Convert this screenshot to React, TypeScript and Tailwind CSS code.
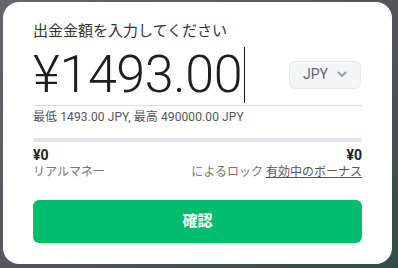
export default function App() {
  return (
    <div className="w-[398px] h-[268px] bg-gradient-to-br from-[#65656d] via-[#55555d] to-[#2f4d47] p-[3px] pt-[2px] pr-[6px] pb-[4px]">
      <div
        className="h-full w-full bg-white rounded-[16px] px-[30px] pt-[18px] text-[#222]"
        style={{ fontFamily: 'Roboto, "Noto Sans CJK JP", sans-serif' }}
      >
        <div className="text-[15px] leading-[22px] text-[#333]">出金金額を入力してください</div>
        <div className="flex items-center justify-between border-b border-[#dcdcdc] h-[62px] mt-[2px]">
          <div className="flex items-center">
            <span className="text-[52px] font-light leading-none text-[#1d1d24] tracking-[-0.4px]">¥1493.00</span>
            <span className="w-px h-[56px] bg-[#111] ml-[2px]" />
          </div>
          <div className="flex items-center gap-[9px] h-[28px] px-[13px] rounded-[6px] bg-[#f3f5f8] border border-[#e4e7eb] text-[14px] text-[#666] mr-[1px]">
            JPY
            <svg width="10" height="7" viewBox="0 0 10 7">
              <path d="M1.5 1.5 L5 5 L8.5 1.5" fill="none" stroke="#9aa0a8" strokeWidth="2" strokeLinecap="round" strokeLinejoin="round" />
            </svg>
          </div>
        </div>
        <div className="text-[12px] text-[#555] mt-[3px] leading-[17px] tracking-[0.1px]">最低 1493.00 JPY, 最高 490000.00 JPY</div>
        <div className="h-[4px] rounded-full bg-[#e1e4e8] mt-[12px]" />
        <div className="flex justify-between items-end mt-[4px]">
          <div className="flex flex-col">
            <span className="text-[14px] font-bold leading-[18px] text-[#222]">¥0</span>
            <span className="text-[12px] leading-[17px] text-[#777]">リアルマネー</span>
          </div>
          <div className="flex flex-col items-end">
            <span className="text-[14px] font-bold leading-[18px] text-[#222]">¥0</span>
            <span className="text-[12px] leading-[17px] text-[#777]">
              によるロック <span className="underline text-[#555]">有効中のボーナス</span>
            </span>
          </div>
        </div>
        <button className="mt-[19px] w-full h-[43px] rounded-[6px] bg-[#00bd6e] text-white font-bold text-[15px]">
          確認
        </button>
      </div>
    </div>
  )
}
